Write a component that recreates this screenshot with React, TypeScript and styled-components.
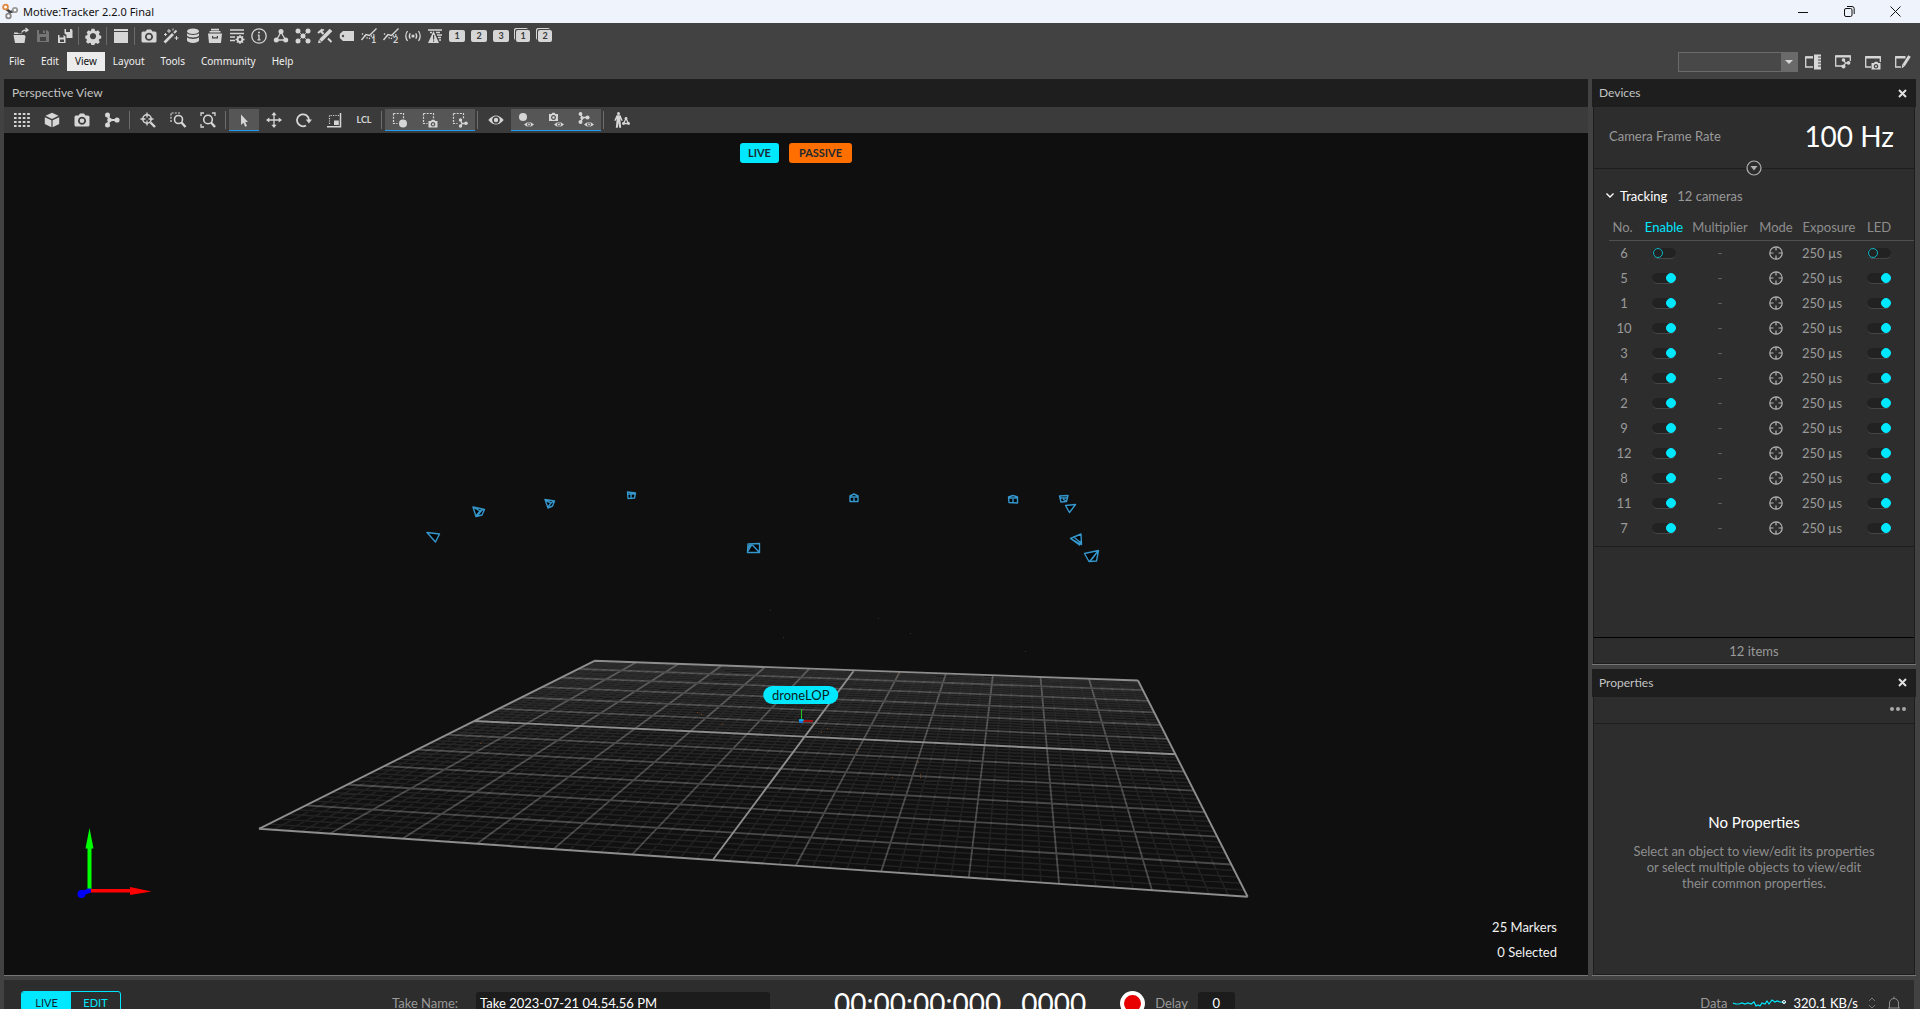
import React from "react";
import styled, { createGlobalStyle } from "styled-components";

const ui = `Lato, "Open Sans", sans-serif`;
const system = `"Noto Sans", "Open Sans", sans-serif`;
const cyan = "#00e8ff";
const iconColor = "#d6d6d6";

const GlobalStyle = createGlobalStyle`
  *, *::before, *::after { box-sizing: border-box; }
  body { margin: 0; background: #424242; font-family: ${ui}; }
  button, input, select { font: inherit; color: inherit; margin: 0; padding: 0; border: 0; background: none; }
  svg { display: block; }
`;

const Window = styled.div`
  height: 100vh;
  display: flex;
  flex-direction: column;
  overflow: hidden;
  background: #424242;
  color: #9a9a9a;
  font-size: 13px;
`;

/* ---------- title bar ---------- */

const TitleBar = styled.header`
  flex: none;
  height: 23px;
  display: flex;
  align-items: center;
  background: #eff3fb;
  color: #111;
  padding: 0 2px 0 1px;
`;
const AppTitle = styled.h1`
  flex: 1;
  margin: 0 0 0 4px;
  font: 400 11px/16px ${system};
`;
const WindowButton = styled.button`
  width: 46px;
  height: 23px;
  display: grid;
  place-items: center;
`;

/* ---------- tool and menu rows ---------- */

const MainTools = styled.div`
  flex: none;
  height: 26px;
  display: flex;
  align-items: center;
  padding-left: 10px;
`;
const ToolButton = styled.button<{ $w?: number; $on?: boolean; $dim?: boolean }>`
  width: ${(p) => p.$w ?? 22}px;
  height: ${(p) => (p.$on === undefined ? 20 : 22)}px;
  display: grid;
  place-items: center;
  color: ${(p) => (p.$dim ? "#757575" : iconColor)};
  ${(p) => p.$on && "background: #565656; border-bottom: 1px solid #1e9bf0;"}
`;
const Divider = styled.span`
  flex: none;
  width: 1px;
  height: 18px;
  margin: 0 3px 0 2px;
  background: #6c6c6c;
`;
const NumberTile = styled.span<{ $stack?: boolean }>`
  width: ${(p) => (p.$stack ? 14 : 16)}px;
  height: 12px;
  border-radius: 2px;
  background: ${iconColor};
  color: #3a3a3a;
  font: 700 9px/12px ${ui};
  text-align: center;
  ${(p) => p.$stack && `box-shadow: -1px -1px 0 #424242, -2px -2px 0 ${iconColor};`}
`;
const MenuRow = styled.div`
  flex: none;
  height: 30px;
  display: flex;
  align-items: center;
  justify-content: space-between;
  padding: 0 2px 5px 1px;
`;
const Menu = styled.nav`
  display: flex;
  font: 400 10px/19px ${system};
`;
const MenuItem = styled.button<{ $active?: boolean }>`
  height: 19px;
  padding: 0 8px;
  color: ${(p) => (p.$active ? "#111" : "#f0f0f0")};
  background: ${(p) => (p.$active ? "#ececec" : "none")};
`;
const LayoutTools = styled.div`
  display: flex;
  align-items: center;
`;
const LayoutPicker = styled.div`
  position: relative;
  width: 120px;
  height: 20px;
  border: 1px solid #6a6a6a;
  background: linear-gradient(to left, #6a6a6a 16px, #484848 16px);
  select { width: 100%; height: 18px; display: block; appearance: none; }
  svg { position: absolute; right: 4px; top: 7px; pointer-events: none; }
`;

/* ---------- docks ---------- */

const Workspace = styled.main`
  flex: 1;
  min-height: 0;
  display: flex;
  gap: 4px;
  padding: 0 4px;
`;
const ViewPane = styled.section`
  flex: 1;
  min-width: 0;
  display: flex;
  flex-direction: column;
  border-bottom: 1px solid #777;
`;
const Dock = styled.aside`
  width: 324px;
  display: flex;
  flex-direction: column;
  gap: 4px;
`;
const Panel = styled.section<{ $grow: number }>`
  flex: ${(p) => p.$grow} 1 0;
  min-height: 0;
  display: flex;
  flex-direction: column;
  border-bottom: 1px solid #777;
`;
const PanelTitle = styled.h2<{ $inset?: number }>`
  flex: none;
  height: 28px;
  margin: 0;
  padding: 0 5px 0 ${(p) => p.$inset ?? 7}px;
  display: flex;
  align-items: center;
  justify-content: space-between;
  background: #1e1e1e;
  color: #c4c4c4;
  font: 400 12px/16px ${ui};
`;
const CloseButton = styled.button`
  width: 18px;
  height: 18px;
  display: grid;
  place-items: center;
  color: #e0e0e0;
`;
const PanelBody = styled.div`
  flex: 1;
  min-height: 0;
  display: flex;
  flex-direction: column;
  margin: 0 1px;
  border: solid #1e1e1e;
  border-width: 0 1px 1px;
  background: #2d2d2d;
`;
const ViewTools = styled.div`
  flex: none;
  height: 26px;
  display: flex;
  align-items: center;
  padding-left: 3px;
  background: #3b3b3b;
`;
const Lcl = styled.span`
  font: 700 9px/12px ${ui};
`;

/* ---------- viewport ---------- */

const Viewport = styled.div`
  position: relative;
  flex: 1;
  min-height: 0;
  background: #0f0f0f;
  > svg { width: 100%; height: 100%; }
`;
const Badges = styled.div`
  position: absolute;
  top: 10px;
  left: 0;
  right: 0;
  display: flex;
  justify-content: center;
  gap: 10px;
`;
const Badge = styled.span<{ $bg: string; $pad: number }>`
  height: 20px;
  padding: 0 ${(p) => p.$pad}px;
  border-radius: 3px;
  background: ${(p) => p.$bg};
  color: #1c2a30;
  font: 700 11px/20px ${ui};
`;
const BodyLabel = styled.span`
  position: absolute;
  left: 50.3%;
  top: 66.8%;
  transform: translate(-50%, -50%);
  padding: 0 9px;
  border-radius: 9px;
  background: ${cyan};
  color: #0c1c20;
  font: 400 13px/18px ${ui};
`;
const Counters = styled.div`
  position: absolute;
  right: 31px;
  bottom: 10px;
  color: #f2f2f2;
  font: 400 13px/25px ${ui};
  text-align: right;
`;

/* ---------- devices ---------- */

const FrameRate = styled.div`
  position: relative;
  flex: none;
  height: 62px;
  display: flex;
  align-items: center;
  justify-content: space-between;
  padding: 0 20px 3px 15px;
  border-bottom: 1px solid #1e1e1e;
`;
const Rate = styled.strong`
  color: #fff;
  font: 400 28px/34px ${ui};
`;
const Expander = styled.button`
  position: absolute;
  left: 50%;
  bottom: -8px;
  margin-left: -8px;
  background: #2d2d2d;
  border-radius: 50%;
`;
const Group = styled.h3`
  flex: none;
  margin: 0;
  height: 45px;
  padding: 8px 0 0 11px;
  display: flex;
  align-items: center;
  gap: 5px;
  color: #fff;
  font: 400 13px/16px ${ui};
  small { margin-left: 5px; font-size: 13px; color: #9a9a9a; }
`;
const CameraTable = styled.table`
  flex: none;
  margin-left: 15px;
  border-collapse: collapse;
  table-layout: fixed;
  width: calc(100% - 15px);
  font: 400 13px/16px ${ui};
  th { height: 26px; padding: 0; font-weight: 400; border-bottom: 1px solid #505050; color: #8d8d8d; }
  th:first-child { padding-right: 3px; }
  td { height: 25px; padding: 0; text-align: center; }
  td svg { margin: auto; }
`;
const Column = styled.col<{ $w?: number }>`
  width: ${(p) => (p.$w ? `${p.$w}px` : "auto")};
`;
const SortedHead = styled.th`
  && { color: ${cyan}; }
`;
const LastHead = styled.th`
  && { padding-right: 13px; }
`;
const LastCell = styled.td`
  && { padding-right: 13px; }
`;
const ExposureCell = styled.td`
  && { text-align: left; padding-left: 1px; }
`;
const Dash = styled.span`
  color: #666;
`;
const Toggle = styled.input`
  appearance: none;
  display: flex;
  justify-content: flex-start;
  width: 24px;
  height: 11px;
  margin: 2px auto 0;
  border-radius: 6px;
  background: #222;
  border-bottom: 1px solid #454545;
  &::before {
    content: "";
    width: 10px;
    height: 10px;
    margin-left: 1px;
    border-radius: 50%;
    border: 1px solid #0fb4c2;
  }
  &:checked { justify-content: flex-end; }
  &:checked::before { background: ${cyan}; border-color: ${cyan}; }
`;
const ListEnd = styled.div`
  flex: 1;
  margin-top: 6px;
  border-top: 1px solid #1e1e1e;
`;
const ItemCount = styled.div`
  flex: none;
  height: 26px;
  border-top: 1px solid #000;
  font: 400 13px/26px ${ui};
  text-align: center;
`;

/* ---------- properties ---------- */

const PropertyTools = styled.div`
  flex: none;
  height: 27px;
  display: flex;
  align-items: center;
  justify-content: flex-end;
  padding: 0 8px 2px 0;
  border-bottom: 1px solid #1e1e1e;
`;
const Empty = styled.div`
  flex: 1;
  display: flex;
  flex-direction: column;
  align-items: center;
  justify-content: center;
  gap: 11px;
  padding-top: 5px;
  text-align: center;
  strong { color: #fff; font: 400 15px/20px ${ui}; }
  p { margin: 0; max-width: 243px; font: 400 13px/16px ${ui}; color: #8d8d8d; }
`;

/* ---------- control deck ---------- */

const ControlDeck = styled.footer`
  flex: none;
  height: 29px;
  margin: 4px 6px 0 4px;
  padding: 11px 12px 0 17px;
  display: grid;
  grid-template-columns: 371px 442px 1fr auto;
  align-items: start;
  overflow: hidden;
  background: #2d2d2d;
`;
const Cluster = styled.div<{ $gap: number }>`
  display: flex;
  align-items: center;
  gap: ${(p) => p.$gap}px;
  height: 24px;
`;
const ModeSwitch = styled.div`
  display: flex;
  width: 100px;
  height: 24px;
  border: 1px solid ${cyan};
  border-radius: 3px;
  overflow: hidden;
`;
const ModeButton = styled.button<{ $on?: boolean }>`
  flex: 1;
  font: 400 11px/22px ${ui};
  color: ${(p) => (p.$on ? "#123" : cyan)};
  background: ${(p) => (p.$on ? cyan : "none")};
`;
const Field = styled.input<{ $w: number; $center?: boolean }>`
  width: ${(p) => p.$w}px;
  height: 22px;
  padding: 0 4px;
  border-radius: 3px;
  background: #1c1c1c;
  color: #fff;
  text-align: ${(p) => (p.$center ? "center" : "left")};
`;
const Timecode = styled.output<{ $after: number }>`
  margin-right: ${(p) => p.$after}px;
  color: #fff;
  font: 400 28px/24px ${ui};
  white-space: nowrap;
`;
const RecordButton = styled.button`
  flex: none;
  width: 25px;
  height: 25px;
  border-radius: 50%;
  border: 4px solid #fff;
  background: #e80000;
`;
const DataRate = styled.span`
  color: #fff;
`;

/* ---------- icons ---------- */

const Glyph = ({ children, size = 16 }: { children: React.ReactNode; size?: number }) => (
  <svg width={size} height={size} viewBox="0 0 16 16" fill="currentColor" stroke="none" overflow="visible" aria-hidden="true">
    {children}
  </svg>
);
const line = { fill: "none", stroke: "currentColor", strokeWidth: 1.3 };
const thick = { fill: "none", stroke: "currentColor", strokeWidth: 2 };
const dotted = { fill: "none", stroke: "currentColor", strokeWidth: 1.2, strokeDasharray: "2 1.2" };

const MiniCamera = () => (
  <>
    <path fillRule="evenodd" d="M7 9h2l.8-1.3h2.600L13.200 9H15.500v6.500H6.500V9zM11 10a2.300 2.300 0 1 0 .01 0z" />
    <circle cx="11" cy="12.300" r="1.100" />
  </>
);
const MiniEye = () => (
  <path fillRule="evenodd" d="M6 12.500Q11 7.500 16 12.500Q11 17 6 12.500zM11 10.600a1.900 1.900 0 1 0 .01 0zM11 11.600a.9.9 0 1 1-.01 0z" />
);
const DashedBox = () => <path {...dotted} d="M1.500 1.500h10v5M1.500 1.500v10h4" />;

const icons: Record<string, React.ReactNode> = {
  open: (
    <>
      <path d="M.5 7h11l1 1.500-1 6.500H2z" />
      <path d="M1 6V4.500h3.500l1 1H9V6z" />
      <path {...line} d="M9 4.500c0-2 2-2.500 5-2.500M12.500 0l2.500 2-2.500 2" />
    </>
  ),
  save: <path fillRule="evenodd" d="M2 2h2v4h7V2h1l2 2v10H2zM8 2.500h2V5H8zM5 9v4h6V9z" />,
  saveAll: (
    <>
      <path fillRule="evenodd" d="M1 7h1.500v2.500h4V7L8.500 8.500V15H1zM3 11.500h4V14H3z" />
      <path fillRule="evenodd" d="M7.500 1H9v3h4V1h1.500l1 1v8H9.500V7L7.500 5.500z" />
    </>
  ),
  gear: (
    <path
      fillRule="evenodd"
      d="M6.500.8h3l.5 1.900 1.200.5 1.700-1 2 2-1 1.700.5 1.300 1.800.5v2.800l-1.900.5-.5 1.200 1 1.700-2 2-1.700-1-1.200.5-.5 1.700h-3l-.5-1.800-1.200-.5-1.700 1-2-2 1-1.700-.5-1.100L.3 10.500V7.700l1.800-.5.5-1.300-1-1.700 2-2 1.700 1L6 2.700zM8 5a3.100 3.100 0 1 0 .01 0z"
    />
  ),
  window: <path d="M1 1h14v2H1zM1 4h14v11H1z" />,
  camera: (
    <>
      <path fillRule="evenodd" d="M2 3.500h2.500L6 1.500h4l1.500 2H14a1.500 1.500 0 0 1 1.500 1.500v8A1.500 1.500 0 0 1 14 14.500H2A1.500 1.500 0 0 1 .5 13V5A1.500 1.500 0 0 1 2 3.500zM8 4.800a4 4 0 1 0 .01 0z" />
      <circle cx="8" cy="8.800" r="2.300" />
    </>
  ),
  wand: (
    <>
      <path {...thick} strokeWidth={2.600} d="M1.500 14.500L10 6" />
      <path {...thick} d="M11 5l2.500-2.500" />
      <path {...line} strokeWidth={1} d="M6 1v4M4 3h4M2.500 5v3M1 6.500h3M13.500 8v4M11.500 10h4M10 .5v2" />
    </>
  ),
  database: (
    <>
      <ellipse cx="8" cy="3.300" rx="6" ry="2.800" />
      <path d="M2 5.200c2 2.300 10 2.300 12 0v2.300c-1 2.600-11 2.600-12 0zM2 9.200c2 2.300 10 2.300 12 0v3.300c-1 3.200-11 3.200-12 0z" />
    </>
  ),
  archive: (
    <>
      <path d="M4 .8h8v1.700H4zM2.500 3h11v1.500h-11z" />
      <path fillRule="evenodd" d="M1 5.500h14L14 15H2zM5 8v2.500h6V8h-1.200v1.300H6.200V8z" />
    </>
  ),
  listGear: (
    <>
      <path {...line} strokeWidth={1.400} d="M1 2h14M1 5.500h14M1 9h5M1 12.500h5" />
      <circle {...thick} cx="11" cy="11.500" r="2.400" />
      <path {...line} d="M11 7v1.800M11 14v2M6.500 11.500h2M13.500 11.500h2M7.900 8.400l1.200 1.200M12.900 13.400l1.200 1.200M14.100 8.400l-1.200 1.200M9.100 13.400l-1.200 1.200" />
    </>
  ),
  info: (
    <>
      <circle {...line} cx="8" cy="8" r="7.200" />
      <circle cx="8" cy="4.500" r="1" />
      <path {...line} d="M8 6.800v5M6.800 7.200H8M6.500 11.800h3" />
    </>
  ),
  rigid: (
    <>
      <path {...line} d="M8 4L3.500 12h9z" />
      <circle cx="8" cy="3.500" r="2.500" />
      <circle cx="3.300" cy="12" r="2.500" />
      <circle cx="12.700" cy="12" r="2.500" />
    </>
  ),
  markers: (
    <>
      <path {...line} strokeWidth={0.800} d="M3 3l10 10M13 3L3 13" />
      {[[3, 3], [13, 3], [8, 8], [3, 13], [13, 13]].map(([x, y]) => (
        <circle key={`${x}-${y}`} cx={x} cy={y} r="2.500" />
      ))}
    </>
  ),
  tools: (
    <>
      <path {...thick} strokeWidth={3.800} d="M3.500 12.500L14 2" />
      <path d="M1 15.200l.8-3.400 2.600 2.600z" />
      <path {...thick} d="M1 5L5.500 1.200M3.500 3l3 3M11 10.500l3.500 3.500" />
      <path {...line} d="M7 1.500L4 4" />
    </>
  ),
  tag: <path fillRule="evenodd" d="M4 3h11v10H4L.8 10V6zM4 6.800a1.200 1.200 0 1 0 .01 0z" />,
  wave: (
    <>
      <circle cx="8" cy="8" r="1.600" />
      <path {...line} d="M5.300 5.300q-2 2.700 0 5.400M10.700 5.300q2 2.700 0 5.400M2.500 3q-3.400 5 0 10M13.500 3q3.400 5 0 10" />
    </>
  ),
  warning: (
    <>
      <path {...line} d="M1 2h14M3 4.500h2M9 4.500h4M10 7h5M11 9.500h3M12 12h2" />
      <path fillRule="evenodd" d="M6.500 3L12 15H1zM6 7h1.200v4.500H6zM6 12.500h1.200v1.200H6z" />
    </>
  ),
  grid: (
    <>
      {[0, 1, 2, 3].map((c) => [0, 1, 2, 3].map((r) => <rect key={`${c}-${r}`} x={c * 4.4} y={1 + r * 4} width="2.600" height="2" />))}
    </>
  ),
  cube: <path d="M8 .8l6.500 3L8 7 1.500 3.800zM.8 5.200L7.400 8.300v7L.8 12zM15.200 5.200L8.600 8.300v7l6.600-3.300z" />,
  skeleton: (
    <>
      <path {...thick} d="M3.500 3.500L6 8l-2.500 4.500M6 8h7" />
      <circle cx="3.500" cy="3" r="2.500" />
      <circle cx="3.500" cy="13" r="2.500" />
      <circle cx="5.500" cy="8" r="2.300" />
      <circle cx="13" cy="8" r="2.600" />
    </>
  ),
  target: (
    <>
      <circle {...line} strokeWidth={1.500} cx="7" cy="7" r="4.200" />
      <path {...line} d="M7 .5v5M7 8.500v5M.5 7h5M8.500 7h5" />
      <path {...thick} strokeWidth={2.400} d="M10.500 10.500l4.500 4.500" />
    </>
  ),
  zoomBox: (
    <>
      <path {...dotted} d="M1 10V1h9" />
      <circle {...line} strokeWidth={1.600} cx="8.500" cy="7.500" r="4" />
      <path {...thick} strokeWidth={2.400} d="M11.500 10.500l4 4.500" />
    </>
  ),
  zoomFit: (
    <>
      <path {...line} d="M1 4V1h3M12 1h3v3M1 12v3h3" />
      <circle {...line} strokeWidth={1.600} cx="8" cy="7.500" r="4.300" />
      <path {...thick} strokeWidth={2.400} d="M11 10.500l4 4.500" />
    </>
  ),
  pointer: <path d="M5 2.500l7 7.500H9.200l1.800 4-1.800.8-1.800-4L5 13z" />,
  move: (
    <>
      <path {...line} d="M8 2v12M2 8h12" />
      <path d="M8 0l2.600 3.300H5.400zM8 16l2.600-3.300H5.400zM0 8l3.300-2.600v5.200zM16 8l-3.300-2.600v5.200z" />
    </>
  ),
  rotate: (
    <>
      <path {...thick} strokeWidth={1.800} d="M10 13.500A6 6 0 1 1 13 8" />
      <path d="M9.800 7.500h6.200l-3.100 4z" />
    </>
  ),
  scale: (
    <>
      <path {...dotted} strokeDasharray="1.200 1.200" d="M3.500 12V3.500H13" />
      <path d="M8 8.500h4.800V13H8z" />
      <path {...line} strokeWidth={1.500} d="M14.500 1v13.800H1" />
    </>
  ),
  pickMarker: (
    <>
      <DashedBox />
      <circle cx="11" cy="11.500" r="4" />
    </>
  ),
  pickCamera: (
    <>
      <DashedBox />
      <MiniCamera />
    </>
  ),
  pickSkeleton: (
    <>
      <DashedBox />
      <path {...line} d="M8.500 8.500l1.500 3-1.500 3M10 11.500h4" />
      <circle cx="8.500" cy="8" r="1.700" />
      <circle cx="8.500" cy="14" r="1.700" />
      <circle cx="14" cy="11.300" r="1.800" />
    </>
  ),
  eye: (
    <>
      <path fillRule="evenodd" d="M.3 8Q8-1 15.700 8 8 17 .3 8zM8 4.200a3.800 3.800 0 1 0 .01 0z" />
      <circle cx="8" cy="8" r="2.200" />
    </>
  ),
  showMarker: (
    <>
      <circle cx="5" cy="5" r="4" />
      <MiniEye />
    </>
  ),
  showCamera: (
    <>
      <path fillRule="evenodd" d="M1 2h2.500l.8-1.300h2.400L7.500 2H10v7H1zM5.500 3a2.500 2.500 0 1 0 .01 0z" />
      <circle cx="5.500" cy="5.500" r="1.200" />
      <MiniEye />
    </>
  ),
  showSkeleton: (
    <>
      <path {...line} d="M2.500 2.500L4.500 6 3 9.500M4.500 5.500H9" />
      <circle cx="2.500" cy="2" r="1.900" />
      <circle cx="2.500" cy="10" r="2" />
      <circle cx="4" cy="6" r="1.700" />
      <circle cx="9.500" cy="5.500" r="2.100" />
      <MiniEye />
    </>
  ),
  person: (
    <>
      <circle cx="4.500" cy="1.500" r="1.500" />
      <path d="M2.500 3.300h4l2.200 5.200-1.100.6-1.300-2.400L7.200 15.700H5.200L4.500 10.500l-.7 5.200h-2L2.700 6.700 1.400 9.100.3 8.500z" />
      <path {...line} d="M12 6.500l-2.500 5h5z" />
      <circle cx="12" cy="6.500" r="1.400" />
      <circle cx="9.500" cy="11.500" r="1.400" />
      <circle cx="14.500" cy="11.500" r="1.400" />
    </>
  ),
  layoutRuler: (
    <>
      <path {...line} d="M8 3H.7v10H8" />
      <path d="M.5 2.500H8v2H.5z" />
      <path fillRule="evenodd" d="M9 .5h7v2h-3v1h3v2h-3v1h3v2h-3v1h3v2h-3v1h3v3H9z" />
    </>
  ),
  layoutSkeleton: (
    <>
      <path {...line} d="M8 12H.7V2h14.600v5" />
      <path d="M.5 1.500h15v2H.5z" />
      <path {...line} d="M8.500 6l2 3-2 3.500M10 9h3.500" />
      <circle cx="8.500" cy="6" r="1.800" />
      <circle cx="8.500" cy="12.500" r="2" />
      <circle cx="13.500" cy="8.800" r="1.900" />
    </>
  ),
  layoutCamera: (
    <>
      <path {...line} d="M6 13H.7V3h14.600v5" />
      <path d="M.5 2h15v2.500H.5z" />
      <MiniCamera />
    </>
  ),
  layoutEdit: (
    <>
      <path {...line} d="M6 13H.7V3H10" />
      <path d="M.5 2h10v2.500H.5z" />
      <path {...thick} strokeWidth={3} d="M8.500 11.500L14.500 2" />
      <path d="M7 10.500l2.500 1.800L6.800 14.500z" />
    </>
  ),
};

const graph = (n: string) => (
  <>
    <path {...line} strokeWidth={1.400} d="M.5 12L5 6.500l3.500 1L15.500.5" />
    <path {...line} strokeDasharray="1.500 1.500" d="M1 5.500l3 3 4 2.500 3-4h4" />
    <text x="10" y="15" fontSize="9" fontWeight="700" fontFamily="Lato, sans-serif">{n}</text>
  </>
);

const XIcon = () => (
  <svg width="9" height="9" viewBox="0 0 9 9" fill="none" stroke="currentColor" strokeWidth="2" aria-hidden="true">
    <path d="M1 1l7 7M8 1l-7 7" />
  </svg>
);

const Crosshair = () => (
  <svg width="14" height="14" viewBox="0 0 14 14" fill="none" stroke="#b4b4b4" strokeWidth="1.200" aria-label="Tracking mode">
    <circle cx="7" cy="7" r="6.200" />
    <path d="M7 1v3.500M7 9.500V13M1 7h3.500M9.500 7H13" />
  </svg>
);

/* ---------- 3D scene ---------- */

type Point = [number, number];
const corners: Point[] = [[594.5, 660.8], [1138, 680.5], [1247.7, 896.8], [259, 828.8]];

// Projective map from the unit square onto the four ground-plane corners.
const project = (() => {
  const [[x0, y0], [x1, y1], [x2, y2], [x3, y3]] = corners;
  const dx1 = x1 - x2, dx2 = x3 - x2, sx = x0 - x1 + x2 - x3;
  const dy1 = y1 - y2, dy2 = y3 - y2, sy = y0 - y1 + y2 - y3;
  const det = dx1 * dy2 - dx2 * dy1;
  const g = (sx * dy2 - dx2 * sy) / det;
  const h = (dx1 * sy - sx * dy1) / det;
  return (u: number, v: number): Point => {
    const w = g * u + h * v + 1;
    return [
      ((x1 - x0 + g * x1) * u + (x3 - x0 + h * x3) * v + x0) / w,
      ((y1 - y0 + g * y1) * u + (y3 - y0 + h * y3) * v + y0) / w,
    ];
  };
})();

const segment = (a: Point, b: Point) => `M${a.map((n) => n.toFixed(1))}L${b.map((n) => n.toFixed(1))}`;
const gridLines = (test: (i: number) => boolean) =>
  Array.from({ length: 61 }, (_, i) => i)
    .filter(test)
    .map((i) => segment(project(i / 60, 0), project(i / 60, 1)) + segment(project(0, i / 60), project(1, i / 60)))
    .join("");
const minor = gridLines((i) => i % 5 !== 0);
const major = gridLines((i) => i % 5 === 0 && i % 30 !== 0);
const axes = gridLines((i) => i % 30 === 0);

const cameraShapes = [
  "M427 532.500L439.500 534 435.500 542z",
  "M473 507L484.500 509.500 482 515 476 516.500zM473 507L480 511 476 516M480 511L484 509M477 516L482 510",
  "M545 499.500L554.500 501 552.500 506 548 508zM545 500L551 503 548 507M551 503L554 501",
  "M627.500 492L635.500 493 634.500 498 628 498.500zM628 494H635M631 494V498",
  "M748 544L759.500 543.500 759.500 552.500 747.500 552.500zM748 551L752 544.500 759 552M751 544L748 548",
  "M850 496L854 494 858 496 858 501.500 850 501.500zM850 497H858M854 498V501",
  "M1008.500 497L1013 495.500 1017.500 497 1017.500 503 1009 502.500zM1009 498H1017M1013 499V502",
  "M1059.500 496L1068 495.500 1066.500 501.500 1061 502zM1060 498H1067M1063 499L1066 501",
  "M1065.500 505.500L1075.500 504.500 1069.500 512.500z",
  "M1081 534L1081.500 544.500 1070.500 538.500zM1070.500 538.500L1079.500 545 1081 541M1073 536.500L1080 542",
  "M1084.500 553.500L1098.500 550.500 1096.500 561 1089 561.500zM1098 551L1090 561M1098 551L1092 559",
];
const strayMarkers: Point[] = [[697, 712], [701, 714], [722, 724], [480, 743], [898, 674], [821, 732], [827, 728], [856, 749], [918, 762], [920, 774], [892, 777], [920, 777]];
const dimMarkers: Point[] = [[770, 610], [783, 637], [910, 633], [878, 618], [1025, 651]];

const Scene = () => (
  <svg viewBox="4 133 1584 842" role="img" aria-label="Perspective view of the capture volume">
    <defs>
      <linearGradient id="ground" x1="0" y1="0" x2="0" y2="1">
        <stop offset="0" stopColor="#1b1b1b" />
        <stop offset="0.450" stopColor="#111" />
        <stop offset="1" stopColor="#0f0f0f" />
      </linearGradient>
    </defs>
    <polygon points={corners.join(" ")} fill="url(#ground)" />
    <g fill="none">
      <path d={minor} stroke="#fff" strokeOpacity="0.080" strokeWidth="1.500" />
      <path d={major} stroke="#fff" strokeOpacity="0.240" strokeWidth="1.800" />
      <path d={axes} stroke="#8e8e8e" strokeWidth="1.900" />
      <g stroke="#3597cc" strokeWidth="1.400" strokeLinejoin="round" fill="#050505">
        {cameraShapes.map((d) => <path key={d} d={d} />)}
      </g>
      <path d="M801.500 709v11" stroke="#21c321" />
      <path d="M803 721h10" stroke="#a01010" strokeWidth="2" />
    </g>
    <circle cx="801" cy="721" r="2.200" fill="#1474e0" />
    <path d="M799 720h5" stroke={cyan} />
    {strayMarkers.map(([x, y]) => <rect key={`${x}-${y}`} x={x} y={y} width="1" height="1" fill="#8a3c0c" />)}
    {dimMarkers.map(([x, y]) => <rect key={`${x}-${y}`} x={x} y={y} width="1" height="1" fill="#333" />)}
    <path d="M87.500 848h4v42h-4z" fill="#0f0" />
    <path d="M89.500 828l4 20.500h-8z" fill="#0f0" />
    <path d="M90 889h41v3.500H90zM130 887l21.500 4.500-21.500 3.500z" fill="#f00" />
    <circle cx="81.500" cy="894" r="4" fill="#00f" />
    <path d="M81 891.500l7-3h3v4l-7 2.500z" fill="#00f" />
  </svg>
);

/* ---------- data ---------- */

const cameras = [6, 5, 1, 10, 3, 4, 2, 9, 12, 8, 11, 7];
const menus = ["File", "Edit", "View", "Layout", "Tools", "Community", "Help"];

const Tool = ({ name, w, on, dim }: { name: string; w?: number; on?: boolean; dim?: boolean }) => (
  <ToolButton aria-label={name} $w={w} $on={on} $dim={dim}>
    <Glyph>{icons[name]}</Glyph>
  </ToolButton>
);

const viewTools: Array<[string, boolean?] | null> = [
  ["grid"], ["cube"], ["camera"], ["skeleton"], null,
  ["target"], ["zoomBox"], ["zoomFit"], null,
  ["pointer", true], ["move"], ["rotate"], ["scale"], ["LCL"], null,
  ["pickMarker", true], ["pickCamera", true], ["pickSkeleton", true], null,
  ["eye"], ["showMarker", true], ["showCamera", true], ["showSkeleton", true], null,
  ["person"],
];

export default function App() {
  return (
    <Window>
      <GlobalStyle />
      <TitleBar>
        <svg width="18" height="18" viewBox="0 0 18 18" fill="none" strokeWidth="1.800" aria-hidden="true">
          <path d="M4 5l5 4 5-1M9 9l-2 5" stroke="#444" strokeWidth="2.500" />
          <circle cx="4.500" cy="4" r="2.400" stroke="#e0883c" fill="#fff" />
          <circle cx="14" cy="7" r="2.200" stroke="#999" fill="#fff" />
          <circle cx="7.500" cy="13" r="2.300" stroke="#888" fill="#fff" />
        </svg>
        <AppTitle>Motive:Tracker 2.2.0 Final</AppTitle>
        <WindowButton aria-label="Minimize">
          <svg width="10" height="10" stroke="#111"><path d="M0 5.500h10" /></svg>
        </WindowButton>
        <WindowButton aria-label="Restore">
          <svg width="11" height="11" fill="none" stroke="#111"><rect x=".5" y="2.500" width="7.500" height="8" rx="1.500" /><path d="M3 .5h5a2.200 2.200 0 0 1 2.200 2.200V8" /></svg>
        </WindowButton>
        <WindowButton aria-label="Close">
          <svg width="11" height="11" stroke="#111"><path d="M.5.5l10 10M10.500.5l-10 10" /></svg>
        </WindowButton>
      </TitleBar>

      <MainTools>
        <Tool name="open" />
        <Tool name="save" dim />
        <Tool name="saveAll" />
        <Divider />
        <Tool name="gear" />
        <Divider />
        <Tool name="window" />
        <Divider />
        {["camera", "wand", "database", "archive", "listGear", "info", "rigid", "markers", "tools", "tag"].map((n) => (
          <Tool key={n} name={n} />
        ))}
        {["1", "2"].map((n) => (
          <ToolButton key={n} aria-label={`Graph ${n}`}><Glyph>{graph(n)}</Glyph></ToolButton>
        ))}
        <Tool name="wave" />
        <Tool name="warning" />
        {["1", "2", "3"].map((n) => (
          <ToolButton key={n}><NumberTile>{n}</NumberTile></ToolButton>
        ))}
        {["1", "2"].map((n) => (
          <ToolButton key={n}><NumberTile $stack>{n}</NumberTile></ToolButton>
        ))}
      </MainTools>

      <MenuRow>
        <Menu>
          {menus.map((m) => <MenuItem key={m} $active={m === "View"}>{m}</MenuItem>)}
        </Menu>
        <LayoutTools>
          <LayoutPicker>
            <select aria-label="Layout"><option></option></select>
            <svg width="8" height="4" fill={iconColor} aria-hidden="true"><path d="M0 0h8L4 4z" /></svg>
          </LayoutPicker>
          {["layoutRuler", "layoutSkeleton", "layoutCamera", "layoutEdit"].map((n) => <Tool key={n} name={n} w={30} />)}
        </LayoutTools>
      </MenuRow>

      <Workspace>
        <ViewPane>
          <PanelTitle $inset={8}>Perspective View</PanelTitle>
          <ViewTools>
            {viewTools.map((t, i) =>
              t === null ? (
                <Divider key={i} />
              ) : t[0] === "LCL" ? (
                <ToolButton key={i} $w={30}><Lcl>LCL</Lcl></ToolButton>
              ) : (
                <Tool key={i} name={t[0]} w={30} on={t[1]} />
              )
            )}
          </ViewTools>
          <Viewport>
            <Scene />
            <Badges>
              <Badge $bg={cyan} $pad={8}>LIVE</Badge>
              <Badge $bg="#ff6f00" $pad={10}>PASSIVE</Badge>
            </Badges>
            <BodyLabel>droneLOP</BodyLabel>
            <Counters>
              <div>25 Markers</div>
              <div>0 Selected</div>
            </Counters>
          </Viewport>
        </ViewPane>

        <Dock>
          <Panel $grow={586}>
            <PanelTitle>Devices<CloseButton aria-label="Close Devices"><XIcon /></CloseButton></PanelTitle>
            <PanelBody>
              <FrameRate>
                <span>Camera Frame Rate</span>
                <Rate>100 Hz</Rate>
                <Expander aria-label="Show more">
                  <svg width="16" height="16" viewBox="0 0 16 16" fill="none" stroke="#b0b0b0">
                    <circle cx="8" cy="8" r="7" strokeWidth="1.200" />
                    <path d="M4.500 6h7L8 10.500z" fill="#b0b0b0" stroke="none" />
                  </svg>
                </Expander>
              </FrameRate>
              <Group>
                <svg width="10" height="8" fill="none" stroke="#fff" strokeWidth="1.400" aria-hidden="true"><path d="M1.500 1.500L5 5l3.500-3.500" /></svg>
                Tracking <small>12 cameras</small>
              </Group>
              <CameraTable>
                <colgroup>
                  <Column $w={30} /><Column $w={50} /><Column $w={62} /><Column $w={50} /><Column $w={56} /><Column />
                </colgroup>
                <thead>
                  <tr>
                    <th>No.</th><SortedHead>Enable</SortedHead><th>Multiplier</th><th>Mode</th><th>Exposure</th><LastHead>LED</LastHead>
                  </tr>
                </thead>
                <tbody>
                  {cameras.map((n) => (
                    <tr key={n}>
                      <td>{n}</td>
                      <td><Toggle type="checkbox" aria-label={`Enable camera ${n}`} defaultChecked={n !== 6} /></td>
                      <td><Dash>-</Dash></td>
                      <td><Crosshair /></td>
                      <ExposureCell>250 µs</ExposureCell>
                      <LastCell><Toggle type="checkbox" aria-label={`LED of camera ${n}`} defaultChecked={n !== 6} /></LastCell>
                    </tr>
                  ))}
                </tbody>
              </CameraTable>
              <ListEnd />
              <ItemCount>12 items</ItemCount>
            </PanelBody>
          </Panel>

          <Panel $grow={307}>
            <PanelTitle>Properties<CloseButton aria-label="Close Properties"><XIcon /></CloseButton></PanelTitle>
            <PanelBody>
              <PropertyTools>
                <button aria-label="More">
                  <svg width="16" height="4" fill="#a8a8a8"><circle cx="2" cy="2" r="2" /><circle cx="8" cy="2" r="2" /><circle cx="14" cy="2" r="2" /></svg>
                </button>
              </PropertyTools>
              <Empty>
                <strong>No Properties</strong>
                <p>Select an object to view/edit its properties or select multiple objects to view/edit their common properties.</p>
              </Empty>
            </PanelBody>
          </Panel>
        </Dock>
      </Workspace>

      <ControlDeck>
        <ModeSwitch>
          <ModeButton $on>LIVE</ModeButton>
          <ModeButton>EDIT</ModeButton>
        </ModeSwitch>
        <Cluster $gap={18}>
          <label htmlFor="take">Take Name:</label>
          <Field id="take" $w={294} defaultValue="Take 2023-07-21 04.54.56 PM" />
        </Cluster>
        <Cluster $gap={10}>
          <Timecode $after={10}>00:00:00:000</Timecode>
          <Timecode $after={24}>0000</Timecode>
          <RecordButton aria-label="Record" />
          <label htmlFor="delay">Delay</label>
          <Field id="delay" $w={37} $center defaultValue="0" />
        </Cluster>
        <Cluster $gap={6}>
          <span>Data</span>
          <svg width="54" height="10" fill="none" aria-hidden="true">
            <path d="M0 5l3 1 3 0 3-1 3 1 3-1 3 1 3-2 2 4 2-1 2 1 2-3 3 1 2-3 2 3 3-4 3 2 2-1 3 1 3 0 2 1" stroke={cyan} strokeWidth="1.200" />
            <circle cx="51" cy="4" r="1.500" stroke="#fff" />
          </svg>
          <DataRate>320.1 KB/s</DataRate>
          <svg width="16" height="12" viewBox="0 0 16 12" fill="none" stroke="#777" aria-hidden="true"><path d="M5 4L8 1l3 3M5 8l3 3 3-3" /></svg>
          <button aria-label="Notifications">
            <svg width="16" height="16" viewBox="0 0 16 16" fill="none" stroke="#8d8d8d"><path d="M2 13h12M3.500 13V8a4.500 4.500 0 0 1 9 0v5M8 3.500V1.500M6.500 15h3" /></svg>
          </button>
        </Cluster>
      </ControlDeck>
    </Window>
  );
}
